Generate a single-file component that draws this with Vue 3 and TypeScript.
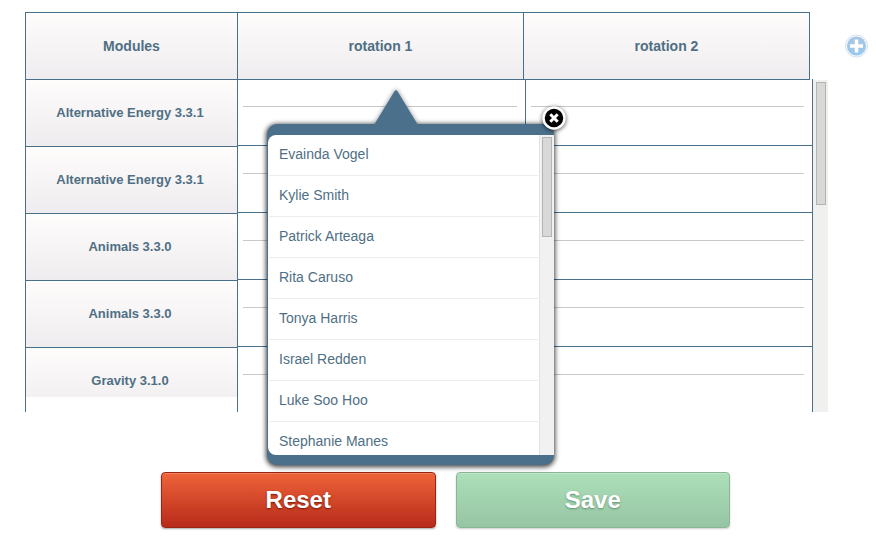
<script setup lang="ts">
import { ref } from 'vue'

const rotations = ref<string[]>(['rotation 1', 'rotation 2'])
const modules: string[] = [
  'Alternative Energy 3.3.1',
  'Alternative Energy 3.3.1',
  'Animals 3.3.0',
  'Animals 3.3.0',
  'Gravity 3.1.0',
]
const students: string[] = [
  'Evainda Vogel',
  'Kylie Smith',
  'Patrick Arteaga',
  'Rita Caruso',
  'Tonya Harris',
  'Israel Redden',
  'Luke Soo Hoo',
  'Stephanie Manes',
]
const pickerOpen = ref(true)
</script>

<template>
  <main class="page">
    <div class="top">
      <section class="schedule">
        <table class="grid">
          <thead>
            <tr>
              <th scope="col">Modules</th>
              <th v-for="r in rotations" :key="r" scope="col">{{ r }}</th>
            </tr>
          </thead>
          <tbody>
            <tr v-for="(m, i) in modules" :key="i">
              <th scope="row">{{ m }}</th>
              <td v-for="r in rotations" :key="r"><div class="slot"></div></td>
            </tr>
          </tbody>
        </table>
        <div class="track"><div class="thumb"></div></div>

        <div v-if="pickerOpen" class="picker">
          <svg class="arrow" width="44" height="35" viewBox="0 0 44 35" aria-hidden="true">
            <path d="M0 35L20.300 1.500Q22-1 23.700 1.500L44 35Z" fill="#4a708b" />
          </svg>
          <div class="picker-body">
            <ul class="names">
              <li v-for="s in students" :key="s">
                <button type="button" class="name">{{ s }}</button>
              </li>
            </ul>
            <div class="picker-track"><div class="picker-thumb"></div></div>
          </div>
          <button type="button" class="close" aria-label="Close" @click="pickerOpen = false">
            <svg width="30" height="30" viewBox="0 0 30 30" aria-hidden="true">
              <circle cx="15" cy="15" r="10.500" fill="#000" stroke="#fff" stroke-width="2.500" />
              <path d="M11.300 11.300L18.700 18.700M18.700 11.300L11.300 18.700" stroke="#fff" stroke-width="3" />
            </svg>
          </button>
        </div>
      </section>

      <button type="button" class="add" aria-label="Add rotation">
        <svg width="24" height="24" viewBox="0 0 24 24" aria-hidden="true">
          <defs>
            <linearGradient id="addFill" x1="0" y1="0" x2="0" y2="1">
              <stop offset="0" stop-color="#a9c5e3" />
              <stop offset="1" stop-color="#97c9ee" />
            </linearGradient>
          </defs>
          <circle cx="12.500" cy="12" r="11" fill="#f4f9fd" stroke="#d3e2ef" />
          <circle cx="12.500" cy="12" r="9.500" fill="url(#addFill)" />
          <path d="M12.500 5.500V18.500M6 12H19" stroke="#fff" stroke-width="3.500" />
        </svg>
      </button>
    </div>

    <div class="actions">
      <button type="button" class="action reset">Reset</button>
      <button type="button" class="action save">Save</button>
    </div>
  </main>
</template>

<style>
body {
  margin: 0;
  background: #fff;
}
</style>

<style scoped>
.page {
  box-sizing: border-box;
  padding: 12px 8px 24px 25px;
  font-family: "Liberation Sans", Arial, sans-serif;
  color: #4f6f84;
}
button {
  font-family: inherit;
  margin: 0;
  padding: 0;
  border: 0;
  background: none;
  cursor: pointer;
}
svg {
  display: block;
}
.top {
  display: flex;
  align-items: flex-start;
  gap: 16px;
}
.schedule {
  position: relative;
  flex: 1;
  display: grid;
  grid-template-columns: 1fr 15px;
  grid-template-rows: 68px 332px;
}
.grid {
  grid-column: 1;
  grid-row: 1 / 3;
  display: block;
}
thead {
  display: block;
  position: relative;
  z-index: 1;
  margin-right: 3px;
}
tbody {
  display: block;
  height: 333px;
  margin-top: -1px;
  overflow: hidden;
  border-right: 1px solid #48708a;
}
tr {
  display: grid;
  grid-template-columns: 212px 1fr 1fr;
  box-sizing: border-box;
  height: 67px;
}
thead tr {
  height: 68px;
  border: 1px solid #48708a;
  border-left: 0;
}
th,
td {
  box-sizing: border-box;
  padding: 0;
  border-left: 1px solid #48708a;
}
th {
  display: flex;
  align-items: center;
  justify-content: center;
  background: linear-gradient(#fffcfc, #eeecee);
  font-size: 13px;
  line-height: 18px;
  font-weight: bold;
}
thead th {
  font-size: 14px;
}
tbody th {
  border-top: 1px solid #48708a;
  padding-right: 3px;
}
tbody tr:last-child th {
  background:
    linear-gradient(#fff, #fff) bottom / 100% 17px no-repeat,
    linear-gradient(#fffcfc, #eeecee);
}
td {
  border-bottom: 1px solid #48708a;
}
.slot {
  margin: 27px 8px 0 5px;
  border-top: 1px solid #c8c8c8;
}
.track {
  grid-column: 2;
  grid-row: 2;
  box-sizing: border-box;
  padding: 2px 2px 0 3px;
  background: #f0f0ef;
}
.thumb {
  box-sizing: border-box;
  height: 123px;
  border: 1px solid #b4b4b4;
  background: #d8d8d7;
}
.picker {
  position: absolute;
  left: 242px;
  top: 112px;
  width: 287px;
  box-sizing: border-box;
  padding: 11px 0 10px 1px;
  border-radius: 10px;
  background: #4a708b;
  box-shadow: 0 1px 5px 1px rgba(0, 0, 0, 0.75);
}
.arrow {
  position: absolute;
  left: 107px;
  top: -34px;
  overflow: visible;
  filter: drop-shadow(0 -1px 2px rgba(0, 0, 0, 0.35));
  clip-path: inset(-6px -6px 0 -6px);
}
.picker-body {
  display: flex;
  height: 320px;
  overflow: hidden;
  border-radius: 8px 0 0 8px;
  background: #fff;
}
.names {
  flex: 1;
  margin: 0;
  padding: 0 1px;
  list-style: none;
}
.names li {
  border-bottom: 1px solid #ececec;
}
.name {
  display: block;
  width: 100%;
  height: 40px;
  padding: 0 10px;
  text-align: left;
  font-size: 14px;
  line-height: 38px;
  padding-bottom: 2px;
  color: #4f6f84;
}
.picker-track {
  width: 15px;
  box-sizing: border-box;
  padding: 2px 2px 0 2px;
  border-left: 1px solid #e2e2e2;
  background: #f1f1f1;
}
.picker-thumb {
  box-sizing: border-box;
  height: 100px;
  border: 1px solid #b4b4b4;
  background: #d8d8d8;
}
.close {
  position: absolute;
  top: -21px;
  right: -15px;
  filter: drop-shadow(0 1px 2px rgba(0, 0, 0, 0.7));
}
.add {
  margin-top: 22px;
}
.actions {
  display: grid;
  grid-template-columns: 1fr 1fr;
  gap: 20px;
  margin: 60px 138px 0 136px;
}
.action {
  height: 56px;
  border-radius: 4px;
  font-size: 24px;
  font-weight: bold;
  color: #fff;
}
.reset {
  border: 1px solid #9a2415;
  background: linear-gradient(#ee6439, #b82a1a);
  box-shadow: inset 0 1px 0 #f0805c, 0 1px 2px rgba(0, 0, 0, 0.35);
  text-shadow: 0 1px 2px rgba(70, 10, 0, 0.7);
}
.save {
  border: 1px solid #8cb598;
  background: linear-gradient(#addfba, #96c5a3);
  box-shadow: inset 0 1px 0 #bfe6c9, 0 1px 2px rgba(0, 0, 0, 0.2);
  text-shadow: 0 1px 2px rgba(60, 100, 70, 0.6);
}
</style>
